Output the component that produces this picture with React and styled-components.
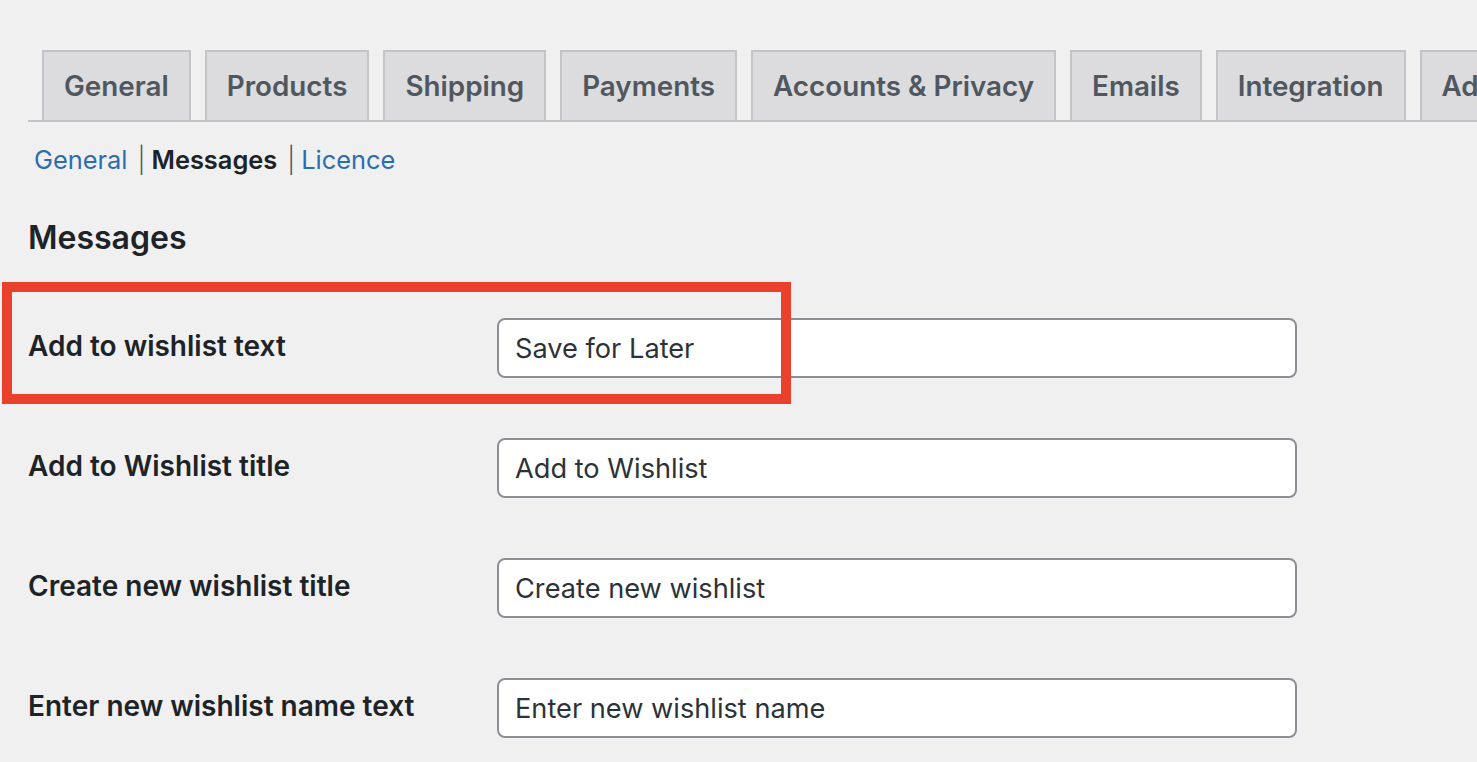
import styled, { createGlobalStyle } from "styled-components";

const GlobalStyle = createGlobalStyle`
    html, body{
        margin: 0;
        padding: 0;
        background: #F0F0F1;
        font-family: 'Inter', 'Liberation Sans', sans-serif;
    }
    *{
        box-sizing: border-box;
    }
`;

const tabs = ["General", "Products", "Shipping", "Payments", "Accounts & Privacy", "Emails", "Integration", "Advanced"];

const sections = [
    { name: "General", current: false },
    { name: "Messages", current: true },
    { name: "Licence", current: false }
];

const fields = [
    { label: "Add to wishlist text", value: "Save for Later", marked: true },
    { label: "Add to Wishlist title", value: "Add to Wishlist" },
    { label: "Create new wishlist title", value: "Create new wishlist" },
    { label: "Enter new wishlist name text", value: "Enter new wishlist name" }
];

function App () {
    return(
        <>
        <GlobalStyle/>
        <Page>
            <TabBar>
                {tabs.map((tab)=> <Tab key={tab}>{tab}</Tab>)}
            </TabBar>
            <SubNav>
                {sections.map((section, i)=>(
                    <li key={section.name}>
                        {i > 0 && <Separator>|</Separator>}
                        <SubLink current={section.current}>{section.name}</SubLink>
                    </li>
                ))}
            </SubNav>
            <Heading>Messages</Heading>
            <Form>
                {fields.map((field)=>(
                    <Row key={field.label}>
                        <Label>{field.label}</Label>
                        <Input defaultValue={field.value} />
                        {field.marked && <Highlight/>}
                    </Row>
                ))}
            </Form>
        </Page>
        </>
    )
}

export default App;

const Page = styled.div`
    width: 100vw;
    height: 100vh;
    overflow: hidden;
    padding: 50px 0 0 28px;
`;

const TabBar = styled.div`
    display: flex;
    gap: 14px;
    padding-left: 14px;
    border-bottom: 2px solid #C3C4C7;
`;

const Tab = styled.div`
    flex-shrink: 0;
    height: 70px;
    padding: 0 20px;
    border: 2px solid #C3C4C7;
    border-bottom: none;
    background: #DCDCDE;
    color: #50575E;
    font-size: 27.8px;
    font-weight: 600;
    line-height: 68px;
    white-space: nowrap;
`;

const SubNav = styled.ul`
    display: flex;
    list-style: none;
    margin: 20px 0 0;
    padding: 0 0 0 6px;
    font-size: 25.4px;
    line-height: 36px;
    li{
        display: flex;
    }
`;

const Separator = styled.span`
    color: #50575E;
    margin: 0 6px 0 10px;
    font-weight: 300;
`;

const SubLink = styled.a`
    color: ${(props)=> props.current ? "#1D2327" : "#2C6DB0"};
    font-weight: ${(props)=> props.current ? 600 : 400};
    text-decoration: none;
`;

const Heading = styled.h2`
    margin: 40px 0 0;
    font-size: 32px;
    font-weight: 600;
    line-height: 40px;
    color: #1D2327;
`;

const Form = styled.div`
    display: flex;
    flex-direction: column;
    gap: 60px;
    margin-top: 60px;
`;

const Row = styled.div`
    position: relative;
    display: grid;
    grid-template-columns: 469px 800px;
    align-items: center;
    height: 60px;
`;

const Label = styled.label`
    font-size: 28px;
    font-weight: 600;
    color: #1D2327;
    margin-top: -4px;
`;

const Input = styled.input`
    width: 800px;
    height: 60px;
    padding: 0 16px;
    border: 2px solid #8C8F94;
    border-radius: 8px;
    background: #FFFFFF;
    color: #2C3338;
    font-family: 'Inter', 'Liberation Sans', sans-serif;
    font-size: 27.2px;
    outline: none;
`;

const Highlight = styled.div`
    position: absolute;
    left: -26px;
    top: -36px;
    width: 789px;
    height: 122px;
    border: 10px solid #E9412B;
    pointer-events: none;
`;
